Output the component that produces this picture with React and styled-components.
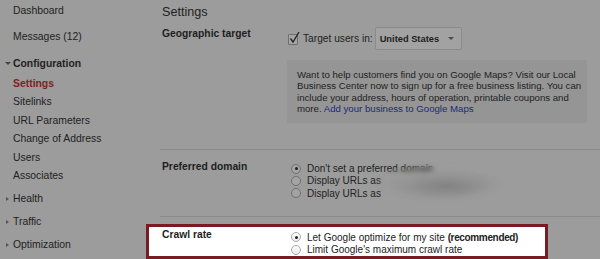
import React from "react";
import styled, { createGlobalStyle, css } from "styled-components";

const Global = createGlobalStyle`
  html, body { margin: 0; padding: 0; }
  body {
    background: #9c9c9c;
    font-family: "Liberation Sans", Arial, sans-serif;
    color: #222;
  }
`;

const Page = styled.div`
  display: flex;
  width: 600px;
  height: 259px;
  overflow: hidden;
`;

const Sidebar = styled.nav`
  width: 150px;
  flex: none;
  padding-left: 4px;
  box-sizing: border-box;
  font-size: 10.4px;
`;

const NavItem = styled.div`
  display: flex;
  align-items: center;
  height: 18.5px;
  margin-top: ${(p) => p.$gap || 0}px;
  font-weight: ${(p) => (p.$bold || p.$active ? "bold" : "normal")};
  color: ${(p) => (p.$active ? "#7c2323" : "#222")};
  white-space: nowrap;
`;

const CaretSlot = styled.span`
  width: 9px;
  flex: none;
  display: flex;
  align-items: center;
  ${(p) =>
    p.$dir === "down" &&
    css`
      &::before {
        content: "";
        margin-left: 1px;
        border-left: 3px solid transparent;
        border-right: 3px solid transparent;
        border-top: 3px solid #444;
      }
    `}
  ${(p) =>
    p.$dir === "right" &&
    css`
      &::before {
        content: "";
        margin-left: 2px;
        border-top: 2.5px solid transparent;
        border-bottom: 2.5px solid transparent;
        border-left: 3px solid #555;
      }
    `}
`;

const Main = styled.main`
  flex: 1;
  min-width: 0;
`;

const Title = styled.h1`
  margin: 0;
  padding-left: 12px;
  font-size: 12.6px;
  font-weight: normal;
  line-height: 24px;
  height: 27px;
  color: #222;
`;

const Row = styled.section`
  display: grid;
  grid-template-columns: 125px 1fr;
  padding-left: 12px;
  padding-top: ${(p) => p.$pt || 0}px;
`;

const Label = styled.div`
  font-weight: bold;
  font-size: 10.3px;
  line-height: 14px;
  color: #1e1e1e;
`;

const Value = styled.div`
  position: relative;
  font-size: 10px;
  color: #222;
  padding-top: ${(p) => p.$pt || 0}px;
`;

const CheckLine = styled.div`
  display: flex;
  align-items: center;
  height: 23px;
  font-size: 10.2px;
`;

const CheckBox = styled.span`
  position: relative;
  width: 8px;
  height: 9px;
  margin-left: 1px;
  margin-right: 5px;
  margin-top: 2px;
  border: 1px solid #6e6e6e;
  border-radius: 1px;
  background: #a4a4a4;
  flex: none;
  svg {
    position: absolute;
    left: 0px;
    top: -4px;
  }
`;

const Select = styled.div`
  display: flex;
  align-items: center;
  justify-content: space-between;
  width: 87px;
  height: 23px;
  margin-left: 2px;
  padding: 0 7px 0 4px;
  box-sizing: border-box;
  background: #a2a2a2;
  border: 1px solid #8b8b8b;
  border-radius: 2px;
  font-weight: bold;
  font-size: 9.3px;
  color: #1e1e1e;
  &::after {
    content: "";
    border-left: 3px solid transparent;
    border-right: 3px solid transparent;
    border-top: 3px solid #4a4a4a;
  }
`;

const InfoBox = styled.div`
  margin-top: 10px;
  width: 300px;
  height: 63px;
  box-sizing: border-box;
  padding: 8.5px 0 0 10px;
  background: #959595;
  font-size: 9.65px;
  line-height: 11.6px;
  color: #222;
  white-space: nowrap;
  overflow: hidden;
`;

const Link = styled.a`
  color: #1e2a7a;
  text-decoration: none;
`;

const Separator = styled.hr`
  margin: ${(p) => p.$mt}px 0 0 10px;
  border: 0;
  border-top: 1px solid #8a8a8a;
  height: 0;
`;

const RadioList = styled.div`
  display: flex;
  flex-direction: column;
`;

const RadioLine = styled.div`
  display: flex;
  align-items: center;
  height: ${(p) => p.$h || 12.3}px;
  white-space: nowrap;
`;

const RadioDot = styled.span`
  width: 8px;
  height: 8px;
  margin: 0 6px 0 4px;
  border-radius: 50%;
  flex: none;
  display: flex;
  align-items: center;
  justify-content: center;
  border: 1px solid ${(p) => (p.$light ? "#a8a8a8" : "#707070")};
  background: ${(p) => (p.$light ? "linear-gradient(#fff, #ececec)" : "#a3a3a3")};
  &::after {
    content: "";
    display: ${(p) => (p.$checked ? "block" : "none")};
    width: 3px;
    height: 3px;
    border-radius: 50%;
    background: #222;
  }
`;

const Smudge = styled.div`
  position: absolute;
  left: 86px;
  top: 1px;
  width: 132px;
  height: 42px;
  backdrop-filter: blur(2.5px);
  background: radial-gradient(ellipse 48% 40% at 55% 60%, rgba(124,124,124,0.8), rgba(140,140,140,0.45) 65%, rgba(156,156,156,0) 100%);
  -webkit-mask-image: radial-gradient(ellipse 50% 50% at 50% 50%, #000 65%, transparent 100%);
  mask-image: radial-gradient(ellipse 50% 50% at 50% 50%, #000 65%, transparent 100%);
`;

const Highlight = styled.section`
  display: grid;
  grid-template-columns: 125px 1fr;
  margin: 7px 0 0 -4px;
  width: 402px;
  box-sizing: border-box;
  padding: 1px 0 0 13px;
  height: 35px;
  background: #fff;
  border: 3px solid #761c22;
`;

const Strong = styled.b`
  font-weight: bold;
  letter-spacing: -0.35px;
`;

const nav = [
  { t: "Dashboard", gap: 1 },
  { t: "Messages (12)", gap: 7.5 },
  { t: "Configuration", gap: 8.5, bold: true, caret: "down" },
  { t: "Settings", gap: 1.5, active: true },
  { t: "Sitelinks" },
  { t: "URL Parameters" },
  { t: "Change of Address" },
  { t: "Users" },
  { t: "Associates" },
  { t: "Health", gap: 4.5, caret: "right" },
  { t: "Traffic", gap: 4.5, caret: "right" },
  { t: "Optimization", gap: 4.5, caret: "right" },
];

export default function App() {
  return (
    <>
      <Global />
      <Page>
        <Sidebar>
          {nav.map((n) => (
            <NavItem key={n.t} $gap={n.gap} $bold={n.bold} $active={n.active}>
              <CaretSlot $dir={n.caret} />
              {n.t}
            </NavItem>
          ))}
        </Sidebar>
        <Main>
          <Title>Settings</Title>
          <Row>
            <Label>Geographic target</Label>
            <Value>
              <CheckLine>
                <CheckBox>
                  <svg width="11" height="13" viewBox="0 0 11 13">
                    <path d="M1.5 7.5 L4 11 L10 1" fill="none" stroke="#222" strokeWidth="1.3" />
                  </svg>
                </CheckBox>
                Target users in:
                <Select>United States</Select>
              </CheckLine>
              <InfoBox>
                Want to help customers find you on Google Maps? Visit our Local
                <br />
                Business Center now to sign up for a free business listing. You can
                <br />
                include your address, hours of operation, printable coupons and
                <br />
                more. <Link>Add your business to Google Maps</Link>
              </InfoBox>
            </Value>
          </Row>
          <Separator $mt={26} />
          <Row $pt={10}>
            <Label>Preferred domain</Label>
            <Value $pt={2.5}>
              <RadioList>
                <RadioLine>
                  <RadioDot $checked />
                  Don't set a preferred domain
                </RadioLine>
                <RadioLine>
                  <RadioDot />
                  Display URLs as
                </RadioLine>
                <RadioLine>
                  <RadioDot />
                  Display URLs as
                </RadioLine>
              </RadioList>
              <Smudge />
            </Value>
          </Row>
          <Separator $mt={17} />
          <Highlight>
            <Label>Crawl rate</Label>
            <Value $pt={2.4}>
              <RadioList>
                <RadioLine $h={12.6}>
                  <RadioDot $checked $light />
                  Let Google optimize for my site&nbsp;<Strong>(recommended)</Strong>
                </RadioLine>
                <RadioLine $h={12.6}>
                  <RadioDot $light />
                  Limit Google's maximum crawl rate
                </RadioLine>
              </RadioList>
            </Value>
          </Highlight>
        </Main>
      </Page>
    </>
  );
}
